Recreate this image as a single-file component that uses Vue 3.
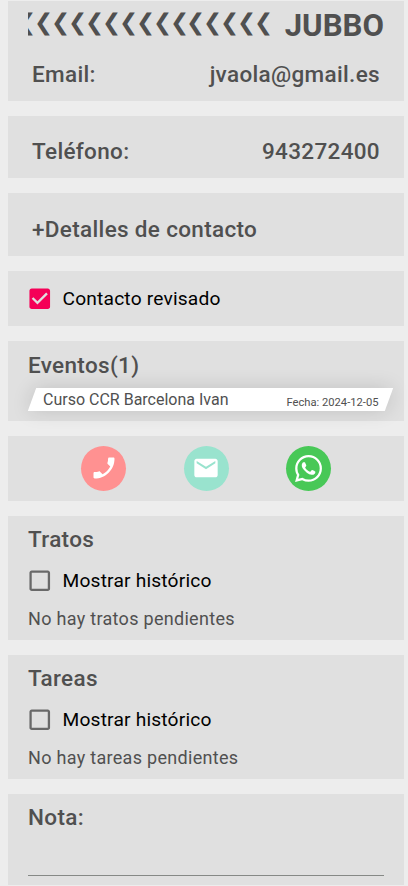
<script setup>
import { ref } from 'vue'

const arrows = '❮'.repeat(15)
const reviewed = ref(true)
const lists = ref([
  { title: 'Tratos', empty: 'No hay tratos pendientes', history: false },
  { title: 'Tareas', empty: 'No hay tareas pendientes', history: false },
])
const unchecked = 'M19 5v14H5V5h14m0-2H5c-1.1 0-2 .9-2 2v14c0 1.1.9 2 2 2h14c1.1 0 2-.9 2-2V5c0-1.1-.9-2-2-2z'
const checked = 'M19 3H5c-1.11 0-2 .9-2 2v14c0 1.1.89 2 2 2h14c1.11 0 2-.9 2-2V5c0-1.1-.89-2-2-2zm-9 14l-5-5 1.41-1.41L10 14.17l7.59-7.59L19 8l-9 9z'
</script>

<template>
  <main class="page">
    <section class="card head">
      <div class="title">
        <span class="arrows">{{ arrows }}</span>
        <h1>JUBBO</h1>
      </div>
      <div class="row heading"><span>Email:</span><span>jvaola@gmail.es</span></div>
    </section>

    <section class="card phone">
      <div class="row heading"><span>Teléfono:</span><span>943272400</span></div>
    </section>

    <section class="card details">
      <div class="row heading"><span>+Detalles de contacto</span></div>
    </section>

    <section class="card reviewed">
      <div class="check" @click="reviewed = !reviewed">
        <svg :class="{ on: reviewed }" viewBox="0 0 24 24"><path :d="reviewed ? checked : unchecked" /></svg>
        <span>Contacto revisado</span>
      </div>
    </section>

    <section class="card events">
      <h2 class="heading">Eventos(1)</h2>
      <div class="event">
        <span class="name">Curso CCR Barcelona Ivan</span>
        <span class="date">Fecha: 2024-12-05</span>
      </div>
    </section>

    <section class="card actions">
      <a class="round call">
        <svg viewBox="0 0 24 24"><path d="M6.62 10.79c1.44 2.83 3.76 5.14 6.59 6.59l2.2-2.2c.27-.27.67-.36 1.02-.24 1.12.37 2.33.57 3.57.57.55 0 1 .45 1 1V20c0 .55-.45 1-1 1-9.39 0-17-7.61-17-17 0-.55.45-1 1-1h3.5c.55 0 1 .45 1 1 0 1.25.2 2.45.57 3.57.11.35.03.74-.25 1.02l-2.2 2.2z" /></svg>
      </a>
      <a class="round mail">
        <svg viewBox="0 0 24 24"><path d="M20 4H4c-1.1 0-1.99.9-1.99 2L2 18c0 1.1.9 2 2 2h16c1.1 0 2-.9 2-2V6c0-1.1-.9-2-2-2zm0 4l-8 5-8-5V6l8 5 8-5v2z" /></svg>
      </a>
      <a class="round chat">
        <svg viewBox="0 0 24 24"><path d="M17.472 14.382c-.297-.149-1.758-.867-2.03-.967-.273-.099-.471-.148-.67.15-.197.297-.767.966-.94 1.164-.173.199-.347.223-.644.075-.297-.15-1.255-.463-2.39-1.475-.883-.788-1.48-1.761-1.653-2.059-.173-.297-.018-.458.13-.606.134-.133.298-.347.446-.52.149-.174.198-.298.298-.497.099-.198.05-.371-.025-.52-.075-.149-.669-1.612-.916-2.207-.242-.579-.487-.5-.669-.51-.173-.008-.371-.01-.57-.01-.198 0-.52.074-.792.372-.272.297-1.04 1.016-1.04 2.479 0 1.462 1.065 2.875 1.213 3.074.149.198 2.096 3.2 5.077 4.487.709.306 1.262.489 1.694.625.712.227 1.36.195 1.871.118.571-.085 1.758-.719 2.006-1.413.248-.694.248-1.289.173-1.413-.074-.124-.272-.198-.57-.347m-5.421 7.403h-.004a9.87 9.87 0 01-5.031-1.378l-.361-.214-3.741.982.998-3.648-.235-.374a9.86 9.86 0 01-1.51-5.26c.001-5.45 4.436-9.884 9.888-9.884 2.64 0 5.122 1.03 6.988 2.898a9.825 9.825 0 012.893 6.994c-.003 5.45-4.437 9.884-9.885 9.884m8.413-18.297A11.815 11.815 0 0012.05 0C5.495 0 .16 5.335.157 11.892c0 2.096.547 4.142 1.588 5.945L.057 24l6.305-1.654a11.882 11.882 0 005.683 1.448h.005c6.554 0 11.89-5.335 11.893-11.893a11.821 11.821 0 00-3.48-8.413z" /></svg>
      </a>
    </section>

    <section v-for="list in lists" :key="list.title" class="card list">
      <h2 class="heading">{{ list.title }}</h2>
      <div class="check" @click="list.history = !list.history">
        <svg :class="{ on: list.history }" viewBox="0 0 24 24"><path :d="list.history ? checked : unchecked" /></svg>
        <span>Mostrar histórico</span>
      </div>
      <p class="empty">{{ list.empty }}</p>
    </section>

    <section class="card note">
      <h2 class="heading">Nota:</h2>
      <div class="field"></div>
    </section>
  </main>
</template>

<style>
body {
  background: #ededed;
}
</style>

<style scoped>
.page {
  display: flex;
  flex-direction: column;
  gap: 15px;
  height: 886px;
  box-sizing: border-box;
  padding: 1px 4px 1px 8px;
  background: #ededed;
  color: #505050;
  font-family: Roboto, "Liberation Sans", sans-serif;
  overflow: hidden;
}
.card {
  box-sizing: border-box;
  flex: none;
  padding: 0 20px;
  background: #e0e0e0;
}
h1, h2, p {
  margin: 0;
}
.heading {
  font-size: 22.5px;
  font-weight: 500;
  line-height: 30px;
  letter-spacing: 0.33px;
}
.row {
  display: flex;
  justify-content: space-between;
  padding: 0 4px;
}
.head {
  height: 100px;
}
.title {
  display: flex;
  justify-content: space-between;
  height: 58px;
}
.arrows {
  display: flex;
  justify-content: flex-end;
  box-sizing: border-box;
  width: 245px;
  padding-right: 2px;
  overflow: hidden;
  white-space: nowrap;
  font-size: 22.8px;
  letter-spacing: -2.1px;
  line-height: 43px;
}
h1 {
  font-size: 31.2px;
  font-weight: 700;
  line-height: 49px;
}
.phone {
  height: 62px;
  padding-top: 20px;
}
.details {
  height: 63px;
  padding-top: 21px;
}
.reviewed {
  height: 55px;
  padding-top: 13px;
}
.check {
  display: flex;
  align-items: center;
  gap: 9px;
  height: 28px;
  margin-left: -2px;
  color: #000;
  font-size: 19.2px;
  letter-spacing: 0.18px;
}
.check svg {
  width: 27.5px;
  height: 27.5px;
  margin-top: 1px;
  fill: #696969;
}
.check svg.on {
  fill: #f50057;
}
.events {
  height: 80px;
  padding-top: 9px;
}
.event {
  position: relative;
  z-index: 0;
  display: flex;
  justify-content: space-between;
  width: 357px;
  height: 23px;
  box-sizing: border-box;
  margin: 8px 0 0 4px;
  padding: 0 10.5px 0 11px;
  line-height: 23px;
}
.event::before {
  content: "";
  position: absolute;
  inset: 0;
  z-index: -1;
  background: #fff;
  box-shadow: 0 0 20px rgba(0, 0, 0, 0.14);
  transform: skewX(-20deg);
}
.name {
  font-size: 16px;
}
.date {
  font-size: 11.2px;
  line-height: 29px;
}
.actions {
  display: flex;
  justify-content: space-between;
  align-items: center;
  height: 65px;
  padding: 0 73px;
}
.round {
  display: flex;
  align-items: center;
  justify-content: center;
  width: 45px;
  height: 45px;
  border-radius: 50%;
}
.round svg {
  width: 28px;
  height: 28px;
  margin-bottom: 1px;
  fill: #fff;
}
.call {
  background: #ff9191;
}
.call svg {
  transform: rotate(-90deg);
}
.mail {
  background: #99e3ce;
}
.chat {
  background: #48c857;
}
.chat svg {
  width: 27px;
  height: 27px;
}
.list {
  height: 124px;
  padding-top: 8px;
}
.list .check {
  margin-top: 12px;
}
.empty {
  margin-top: 13px;
  font-size: 18px;
  line-height: 24px;
  letter-spacing: 0.3px;
}
.note {
  height: 91px;
  padding-top: 8px;
}
.field {
  height: 43px;
  border-bottom: 1px solid #868986;
}
</style>
